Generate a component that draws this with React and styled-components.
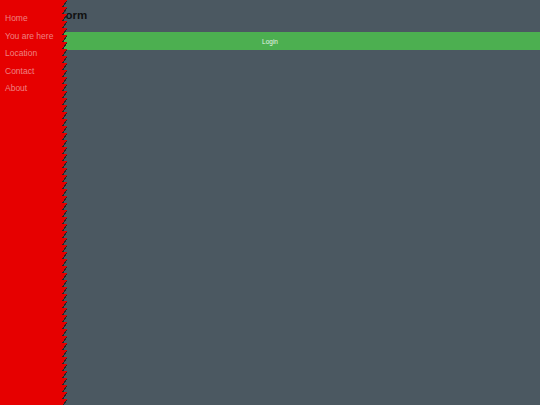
import React from "react";
import styled, { createGlobalStyle } from "styled-components";

const GlobalStyle = createGlobalStyle`
  html, body {
    margin: 0;
    padding: 0;
    height: 100%;
    background: #4b5861;
    font-family: "Liberation Sans", Arial, sans-serif;
  }
  #root {
    min-height: 100%;
  }
`;

const Page = styled.div`
  min-height: 405px;
  background: #4b5861;
`;

const Sidebar = styled.nav`
  position: fixed;
  top: 0;
  left: 0;
  bottom: 0;
  width: 62px;
  background: #e60000;
  display: flex;
  flex-direction: column;
  gap: 8px;
  padding: 14px 0 0 5px;
  box-sizing: border-box;
  z-index: 2;

  &::after {
    content: "";
    position: absolute;
    top: 0;
    right: -5px;
    width: 5px;
    height: 100%;
    background-image: linear-gradient(
      to bottom right,
      #e60000 50%,
      #262626 50%,
      #262626 62%,
      transparent 62%
    );
    background-size: 5px 7px;
  }
`;

const NavLink = styled.a`
  color: #ee8282;
  font-size: 8.5px;
  line-height: 9.5px;
  text-decoration: none;
`;

const Main = styled.main`
  padding-top: 8px;
`;

const Title = styled.h2`
  margin: 0 0 10px 24px;
  font-size: 11.5px;
  line-height: 14px;
  font-weight: bold;
  color: #111;
`;

const LoginButton = styled.button`
  display: block;
  width: 100%;
  height: 18px;
  border: none;
  background: #4caf50;
  color: #e4f3e4;
  font-family: "Liberation Sans", Arial, sans-serif;
  font-size: 6.5px;
  padding: 0;
`;

export default function App() {
  const links = ["Home", "You are here", "Location", "Contact", "About"];
  return (
    <Page>
      <GlobalStyle />
      <Sidebar>
        {links.map((l) => (
          <NavLink key={l} href="#">
            {l}
          </NavLink>
        ))}
      </Sidebar>
      <Main>
        <Title>Login Form</Title>
        <LoginButton>Login</LoginButton>
      </Main>
    </Page>
  );
}
